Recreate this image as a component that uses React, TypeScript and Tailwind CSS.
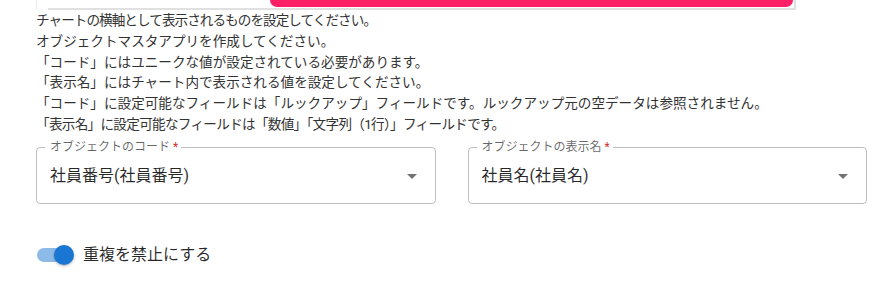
const notes: [string, string][] = [
  ['チャートの横軸として表示されるものを設定してください。', 'tracking-[-0.95px]'],
  ['オブジェクトマスタアプリを作成してください。', ''],
  ['「コード」にはユニークな値が設定されている必要があります。', ''],
  ['「表示名」にはチャート内で表示される値を設定してください。', ''],
  ['「コード」に設定可能なフィールドは「ルックアップ」フィールドです。ルックアップ元の空データは参照されません。', ''],
  ['「表示名」に設定可能なフィールドは「数値」「文字列（1行）」フィールドです。', 'tracking-[-0.7px]'],
];

function ArrowDrop() {
  return (
    <svg viewBox="0 0 24 24" className="w-6 h-6 fill-black/55">
      <path d="M7 10l5 5 5-5z" />
    </svg>
  );
}

function OutlinedSelect({ label, value }: { label: string; value: string }) {
  return (
    <div className="relative flex-1 h-14">
      {/* outline with notch */}
      <fieldset className="absolute inset-0 -top-[5px] m-0 px-2 border border-black/25 rounded pointer-events-none">
        <legend className="px-1 text-[12px] leading-[10px] invisible whitespace-nowrap">
          {label} *
        </legend>
      </fieldset>
      <label className="absolute left-[14px] -top-[9px] text-[12px] leading-[16px] text-black/60 whitespace-nowrap">
        {label}
        <span className="text-[#d32f2f]"> *</span>
      </label>
      <div className="h-full flex items-center justify-between pl-[14px] pr-[12px]">
        <span className="text-[16px] text-black/85">{value}</span>
        <ArrowDrop />
      </div>
    </div>
  );
}

export default function App() {
  return (
    <div
      className="w-[888px] h-[288px] bg-white overflow-hidden"
      style={{ fontFamily: 'Roboto, "Noto Sans CJK JP", sans-serif' }}
    >
      {/* cropped chart preview */}
      <div className="flex h-[10px] pl-[36px]">
        <div className="w-px h-[10px] bg-[#ececec]" />
        <div className="ml-[11px] w-[748px] h-[10px] flex border-b-2 border-[#e0e0e0] border-r-2">
          <div className="w-[222px] h-full" />
          <div className="w-[523px] h-[7px] bg-[#ff1f66] rounded-b-[14px]" />
        </div>
      </div>

      <div className="pl-[36px] pr-[21px]">
        <div className="text-[13.6px] leading-[20.8px] text-[#333]">
          {notes.map(([n, cls]) => (
            <p key={n} className={`whitespace-nowrap ${cls}`}>{n}</p>
          ))}
        </div>

        <div className="flex gap-[32px] mt-[13px]">
          <OutlinedSelect label="オブジェクトのコード" value="社員番号(社員番号)" />
          <OutlinedSelect label="オブジェクトの表示名" value="社員名(社員名)" />
        </div>

        <div className="flex items-center mt-[39px] h-[24px]">
          <div className="relative w-[38px] h-[20px] flex items-center">
            <div className="w-[34px] h-[14px] ml-[1px] rounded-full bg-[#8dbbe9]" />
            <div className="absolute left-[18px] top-0 w-[20px] h-[20px] rounded-full bg-[#1976d2] shadow-[0_1px_3px_rgba(0,0,0,0.3)]" />
          </div>
          <span className="ml-[9px] text-[16px] text-black/85">重複を禁止にする</span>
        </div>
      </div>
    </div>
  );
}
